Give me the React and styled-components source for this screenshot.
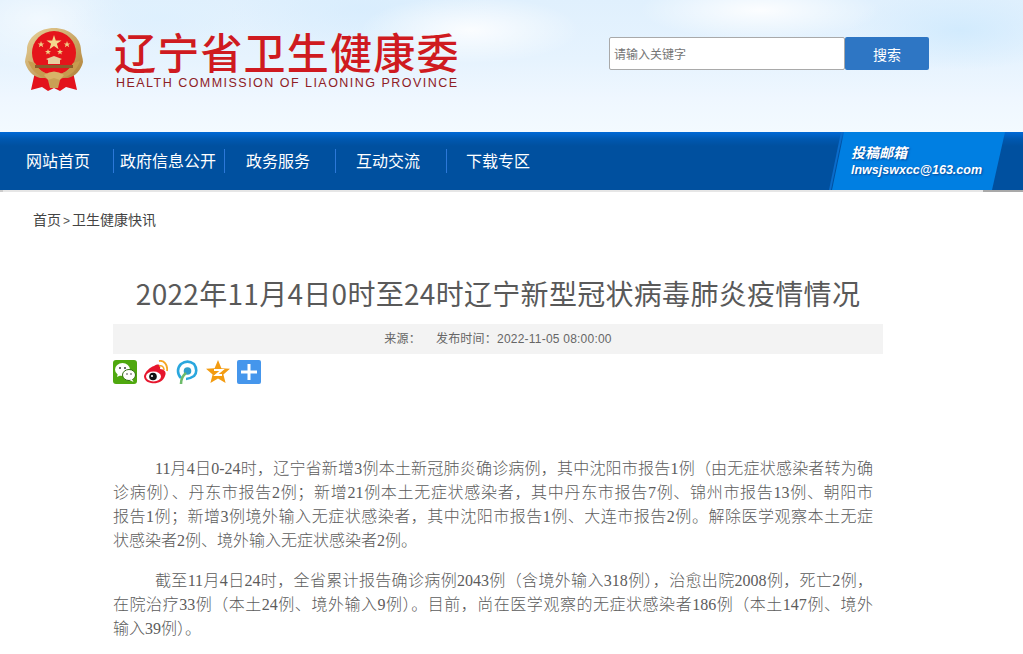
import React from "react";
import styled, { createGlobalStyle } from "styled-components";

const Global = createGlobalStyle`
  html, body { margin: 0; padding: 0; background: #fff; overflow: hidden; }
  * { box-sizing: border-box; }
  body { font-family: "Noto Sans CJK SC", "Liberation Sans", sans-serif; }
`;

const Page = styled.div`width: 1023px; height: 654px; overflow: hidden; background: #fff;`;

const Header = styled.header`
  height: 132px;
  display: flex;
  align-items: flex-start;
  background:
    radial-gradient(ellipse 110px 34px at 470px 30px, rgba(255,255,255,.85), rgba(255,255,255,0)),
    radial-gradient(ellipse 120px 30px at 760px 10px, rgba(255,255,255,.9), rgba(255,255,255,0)),
    radial-gradient(ellipse 90px 30px at 160px 18px, rgba(222,240,254,.9), rgba(222,240,254,0)),
    radial-gradient(ellipse 130px 50px at 360px 10px, rgba(214,236,253,.7), rgba(214,236,253,0)),
    radial-gradient(ellipse 110px 40px at 960px 30px, rgba(208,234,253,.9), rgba(208,234,253,0)),
    radial-gradient(ellipse 90px 50px at 40px 20px, rgba(255,255,255,.55), rgba(255,255,255,0)),
    linear-gradient(180deg, #e0f0fd 0%, #e6f3fe 45%, #eff7ff 75%, #f3faff 100%);
`;

const Emblem = styled.svg`width: 60px; height: 64px; margin: 28px 0 0 24px; flex: none;`;

const Brand = styled.div`margin: 29px 0 0 31px; width: 360px; flex: none;`;
const BrandTitle = styled.div`
  font-size: 42px; line-height: 44px; height: 44px; font-weight: 500; letter-spacing: 1.2px;
  color: #cf1a20; white-space: nowrap; margin-left: -1px;
`;
const BrandSub = styled.div`
  font-family: "Liberation Sans", sans-serif;
  font-size: 12.5px; line-height: 14px; letter-spacing: 1.47px; color: #8e2025;
  white-space: nowrap; margin-top: 3px; margin-left: 1px;
`;

const Search = styled.form`display: flex; margin: 37px 0 0 134px; height: 33px;`;
const SearchInput = styled.input`
  width: 236px; height: 33px; padding: 0 4px; border: 1px solid #a9a9a9; border-radius: 2px;
  background: #fff; font: 12px "Noto Sans CJK SC", sans-serif; outline: none;
  &::placeholder { color: #757575; opacity: 1; }
`;
const SearchButton = styled.button`
  width: 84px; height: 33px; border: 0; border-radius: 2px; background: #2e76c4; color: #fff;
  font: 14px "Noto Sans CJK SC", sans-serif; padding: 0;
`;

const Nav = styled.nav`
  height: 58px; display: flex; align-items: center; position: relative;
  background: linear-gradient(180deg, #0069d6 0, #0058b0 7px, #00509f 14px, #00509f 100%);
`;
const NavItem = styled.a`
  width: ${p => p.$width}px;
  height: 24px; line-height: 20px; color: #fff; font-size: 16px;
  padding: 1px 0 0 ${p => p.$pad}px;
  border-right: 1px solid ${p => (p.$last ? "transparent" : "#2c78d8")};
  white-space: nowrap; flex: none; text-decoration: none;
`;
const MailBox = styled.div`
  margin-left: auto; margin-right: 18px; width: 173px; height: 58px;
  background: #007fe2;
  clip-path: polygon(12px 0, 100% 0, 160px 100%, 0 100%);
  padding: 11px 0 0 19px; color: #fff; font-weight: 700; font-style: italic;
  text-shadow: 1px 1px 2px #00489a;
`;
const MailEdge = styled.span`
  position: absolute; top: 0; left: 829px; width: 14px; height: 58px;
  background: #0a6ccb;
  clip-path: polygon(12px 0, 14px 0, 2px 100%, 0 100%);
`;
const MailTitle = styled.div`font-size: 14px; line-height: 18px;`;
const MailAddr = styled.div`font: italic 700 12.5px/18px "Liberation Sans", sans-serif; white-space: nowrap;`;

const RuleRow = styled.div`height: 2px; background: linear-gradient(90deg, #ccc 0 3px, #e6e6e6 3px 983px, #a9a9a9 983px);`;

const Crumb = styled.div`
  padding: 17px 0 0 33px; font-size: 14px; line-height: 20px; color: #444; height: 50px;
`;
const Sep = styled.span`
  display: inline-block; width: 11px; text-align: center; font-size: 12px; color: #555;
  font-family: "Liberation Sans", sans-serif;
`;

const Article = styled.main`margin: 0 0 0 113px; width: 770px;`;
const Title = styled.h1`
  margin: 29px 0 0; height: 43px; font-size: 28px; line-height: 44px; font-weight: 400; color: #595959;
  text-align: center; white-space: nowrap; letter-spacing: .3px; width: 770px;
`;
const Meta = styled.div`
  margin-top: 10px; height: 30px; background: #f3f3f3; display: flex; justify-content: center; gap: 15px;
  font-family: "Liberation Sans", "Noto Sans CJK SC", sans-serif;
  font-size: 12px; line-height: 30px; color: #666; letter-spacing: .22px;
`;
const Share = styled.div`display: flex; gap: 7px; margin-top: 6px; height: 24px;`;
const ShareIcon = styled.svg`width: 24px; height: 24px; flex: none;`;

const Body = styled.div`
  margin-top: 73px; width: 760px;
  font-family: "Liberation Serif", "Noto Sans CJK SC", serif; font-size: 16px; line-height: 24px; color: #5c5c5c;
  font-weight: 300;
`;
const Para = styled.p`margin: 0 0 16px;`;
const Line = styled.span`
  display: block;
  text-align: ${p => (p.$end ? "left" : "justify")};
  text-align-last: ${p => (p.$end ? "left" : "justify")};
  padding-left: ${p => (p.$indent ? "42px" : "0")};
`;

function EmblemArt() {
  return (
    <Emblem viewBox="0 0 60 64">
      <defs>
        <linearGradient id="g" x1="0" y1="0" x2="1" y2="1">
          <stop offset="0" stopColor="#e8d29c" />
          <stop offset="1" stopColor="#b08238" />
        </linearGradient>
      </defs>
      <path d="M11 44 L7 62 L18 59 L24 63 L30 60 L36 63 L42 59 L53 62 L49 44Z" fill="#e3121c" />
      <path d="M30 0 C44 0 57 9 57 22 C57 26 59 30 59 34 C57 42 52 48 44 50 L16 50 C8 48 3 42 1 34 C1 30 3 26 3 22 C3 9 16 0 30 0Z" fill="url(#g)" />
      <circle cx="30" cy="25" r="22" fill="#e5141b" />
      <path d="M4 33 Q10 50 30 52 Q50 50 56 33 L49 35 Q44 46 30 47 Q16 46 11 35Z" fill="#c79b4f" />
      <path d="M30 7l1.8 5.4h5.7l-4.6 3.4 1.7 5.4-4.6-3.3-4.6 3.3 1.7-5.4-4.6-3.4h5.7z" fill="#f4d98d" />
      <g fill="#f0cf86">
        <path d="M17 13l.9 2.4h2.5l-2 1.4.8 2.4-2.2-1.5-2.1 1.5.7-2.4-1.9-1.4h2.5z" />
        <path d="M43 13l.9 2.4h2.5l-2 1.4.8 2.4-2.2-1.5-2.1 1.5.7-2.4-1.9-1.4h2.5z" />
        <path d="M24 21l.8 2.1h2.2l-1.8 1.3.7 2.1-1.9-1.3-1.9 1.3.7-2.1-1.8-1.3h2.2z" />
        <path d="M36 21l.8 2.1h2.2l-1.8 1.3.7 2.1-1.9-1.3-1.9 1.3.7-2.1-1.8-1.3h2.2z" />
      </g>
      <path d="M22 31 L30 28 L38 31 L36 32 V36 H24 V32Z" fill="#e8cf9f" />
      <rect x="11" y="37" width="38" height="3" fill="#8b5a2a" />
      <path d="M20 47 Q30 40 40 47 L36 52 H24Z" fill="#d8b368" />
      <path d="M24 52 L30 50 L36 52 L34 60 H26Z" fill="#c9a055" />
    </Emblem>
  );
}

export default function App() {
  return (
    <Page>
      <Global />
      <Header>
        <EmblemArt />
        <Brand>
          <BrandTitle>辽宁省卫生健康委</BrandTitle>
          <BrandSub>HEALTH COMMISSION OF LIAONING PROVINCE</BrandSub>
        </Brand>
        <Search onSubmit={e => e.preventDefault()}>
          <SearchInput placeholder="请输入关键字" />
          <SearchButton type="button">搜索</SearchButton>
        </Search>
      </Header>
      <Nav>
        <NavItem $width={114} $pad={26}>网站首页</NavItem>
        <NavItem $width={111} $pad={6}>政府信息公开</NavItem>
        <NavItem $width={111} $pad={21}>政务服务</NavItem>
        <NavItem $width={111} $pad={20}>互动交流</NavItem>
        <NavItem $width={111} $pad={19} $last>下载专区</NavItem>
        <MailEdge />
        <MailBox>
          <MailTitle>投稿邮箱</MailTitle>
          <MailAddr>lnwsjswxcc@163.com</MailAddr>
        </MailBox>
      </Nav>
      <RuleRow />
      <Crumb>首页<Sep>&gt;</Sep>卫生健康快讯</Crumb>
      <Article>
        <Title>2022年11月4日0时至24时辽宁新型冠状病毒肺炎疫情情况</Title>
        <Meta>
          <span>来源：</span>
          <span>发布时间：2022-11-05 08:00:00</span>
        </Meta>
        <Share>
          <ShareIcon viewBox="0 0 24 24">
            <rect width="24" height="24" rx="3" fill="#4fa80f" />
            <ellipse cx="9.5" cy="9.5" rx="7.5" ry="6.5" fill="#fff" />
            <path d="M5 13l-1 4 4-2z" fill="#fff" />
            <ellipse cx="16" cy="15" rx="6.5" ry="5.5" fill="#fff" stroke="#2f6d10" strokeWidth="1" />
            <path d="M19 19l1.5 3-4-2z" fill="#fff" />
            <circle cx="7" cy="8" r="1" fill="#3a3a3a" /><circle cx="12" cy="8" r="1" fill="#3a3a3a" />
            <circle cx="14" cy="14" r=".8" fill="#3a3a3a" /><circle cx="18" cy="14" r=".8" fill="#3a3a3a" />
          </ShareIcon>
          <ShareIcon viewBox="0 0 24 24">
            <path d="M10 6c5-3 7-1 6 3 4 0 7 3 5 7-2 6-8 8-14 7C2 22 0 19 0 16c1-4 6-9 10-10z" fill="#e6162d" />
            <ellipse cx="9.5" cy="16.5" rx="7.5" ry="5" fill="#fff" />
            <circle cx="9" cy="16.5" r="3.8" fill="#111" />
            <circle cx="8" cy="16" r="1.1" fill="#fff" />
            <path d="M15 6c3-1 5 1 5 4" fill="none" stroke="#f5a623" strokeWidth="1.6" />
            <path d="M15 1c5-1 9 4 8 10" fill="none" stroke="#f5a623" strokeWidth="1.8" />
          </ShareIcon>
          <ShareIcon viewBox="0 0 24 24">
            <path d="M6 18C2 14 2 8 6 4c4-3 9-3 13 0 3 4 3 9 0 12-3 2-5 3-8 3" fill="none" stroke="#2aa7de" strokeWidth="2.6" />
            <circle cx="12.5" cy="11" r="3.8" fill="#2f9fc9" />
            <path d="M6 24c0-5 1-8 5-11" fill="none" stroke="#6dbb6a" strokeWidth="2.6" />
          </ShareIcon>
          <ShareIcon viewBox="0 0 24 24">
            <path d="M12 0l3.4 8.2 8.6.6-6.6 5.6 2.2 8.6L12 18.4 4.4 23l2.2-8.6L0 8.8l8.6-.6z" fill="#f39c12" />
            <path d="M8 10h8l-6 5h6" fill="none" stroke="#fff" strokeWidth="2" />
          </ShareIcon>
          <ShareIcon viewBox="0 0 24 24">
            <rect width="24" height="24" rx="2" fill="#4596ec" />
            <path d="M12 4v16M4 12h16" stroke="#fff" strokeWidth="3" />
          </ShareIcon>
        </Share>
        <Body>
          <Para>
            <Line $indent>11月4日0-24时，辽宁省新增3例本土新冠肺炎确诊病例，其中沈阳市报告1例（由无症状感染者转为确</Line>
            <Line>诊病例）、丹东市报告2例；新增21例本土无症状感染者，其中丹东市报告7例、锦州市报告13例、朝阳市</Line>
            <Line>报告1例；新增3例境外输入无症状感染者，其中沈阳市报告1例、大连市报告2例。解除医学观察本土无症</Line>
            <Line $end>状感染者2例、境外输入无症状感染者2例。</Line>
          </Para>
          <Para>
            <Line $indent>截至11月4日24时，全省累计报告确诊病例2043例（含境外输入318例），治愈出院2008例，死亡2例，</Line>
            <Line>在院治疗33例（本土24例、境外输入9例）。目前，尚在医学观察的无症状感染者186例（本土147例、境外</Line>
            <Line $end>输入39例）。</Line>
          </Para>
        </Body>
      </Article>
    </Page>
  );
}
